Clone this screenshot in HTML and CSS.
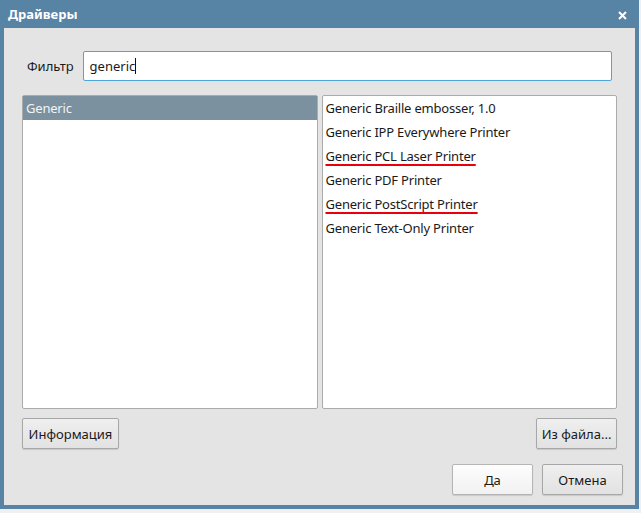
FILE: index.html
```html
<!DOCTYPE html>
<html lang="ru">
<head>
  <meta charset="UTF-8">
  <meta name="viewport" content="width=device-width, initial-scale=1.0">
  <title>Драйверы</title>
  <link rel="stylesheet" href="styles.css">
</head>
<body>
  <div class="window">
    <div class="titlebar">
      <span class="title">Драйверы</span>
      <svg class="close" width="9" height="9" viewBox="0 0 9 9">
        <path d="M1 1 L8 8 M8 1 L1 8" stroke="white" stroke-width="2"/>
      </svg>
    </div>

    <div class="content">
      <!-- Filter -->
      <div class="filter-row">
        <label for="filter">Фильтр</label>
        <div class="filter-input"><span id="filter">generic</span><span class="caret"></span></div>
      </div>

      <!-- Lists -->
      <div class="lists">
        <ul class="list">
          <li class="selected">Generic</li>
        </ul>
        <ul class="list">
          <li>Generic Braille embosser, 1.0</li>
          <li>Generic IPP Everywhere Printer</li>
          <li><span class="marked">Generic PCL Laser Printer</span></li>
          <li>Generic PDF Printer</li>
          <li><span class="marked">Generic PostScript Printer</span></li>
          <li>Generic Text-Only Printer</li>
        </ul>
      </div>

      <div class="row">
        <button class="btn btn-wide">Информация</button>
        <button class="btn">Из файла...</button>
      </div>

      <div class="actions">
        <button class="btn btn-default">Да</button>
        <button class="btn">Отмена</button>
      </div>
    </div>
  </div>
</body>
</html>
```

FILE: styles.css
```css
body {
  margin: 0;
  padding: 0;
  background-color: #eef0f2;
  font-family: 'Noto Sans', 'DejaVu Sans', sans-serif;
  font-size: 13px;
  color: #1a1a1a;
}
.window {
  width: 639px;
  height: 509px;
  box-sizing: border-box;
  padding: 0 4px 4px 4px;
  background-color: #5783a4;
  display: flex;
  flex-direction: column;
}
.titlebar {
  height: 28px;
  display: flex;
  align-items: center;
  justify-content: space-between;
  padding: 0 8px 0 4px;
  color: white;
}
.title {
  font-weight: bold;
  font-size: 13px;
}
.close {
  display: block;
  margin-top: 3px;
}
.content {
  flex: 1;
  background-color: #e4e4e4;
  padding: 23px 18px 10px 18px;
  display: flex;
  flex-direction: column;
}
.filter-row {
  display: flex;
  align-items: center;
  gap: 9px;
  margin: 0 5px;
}
.filter-input {
  flex: 1;
  height: 30px;
  box-sizing: border-box;
  background-color: white;
  border: 1px solid #4da6da;
  border-radius: 2px;
  padding: 0 6px;
  display: flex;
  align-items: center;
}
.caret {
  display: inline-block;
  width: 1px;
  height: 16px;
  background-color: #111;
}
.lists {
  display: flex;
  gap: 4px;
  margin-top: 14px;
  height: 314px;
}
.list {
  flex: 1;
  margin: 0;
  padding: 0;
  list-style: none;
  background-color: white;
  border: 1px solid #ababab;
  border-radius: 2px;
}
.list li {
  height: 24px;
  line-height: 24px;
  padding-left: 3px;
  letter-spacing: -0.2px;
}
.list li.selected {
  background-color: #7b919f;
  color: #f2f4f5;
}
.marked {
  text-decoration: underline;
  text-decoration-color: #e8000b;
  text-decoration-thickness: 2px;
  text-underline-offset: 3px;
}
.row {
  display: flex;
  justify-content: space-between;
  margin-top: 9px;
}
.actions {
  display: flex;
  justify-content: flex-end;
  gap: 9px;
  margin-top: 15px;
  margin-right: -6px;
}
.btn {
  width: 81px;
  height: 31px;
  font-family: inherit;
  font-size: 13px;
  color: #1a1a1a;
  background: linear-gradient(#efefef, #e2e2e2);
  border: 1px solid #a7a7a7;
  border-radius: 2px;
  box-shadow: 0 1px 1px rgba(0, 0, 0, 0.12);
  padding: 0;
}
.btn-wide {
  width: 97px;
}
.btn-default {
  background: linear-gradient(#fdfdfd, #f1f1f1);
  border-color: #b5b5b5;
}
```
